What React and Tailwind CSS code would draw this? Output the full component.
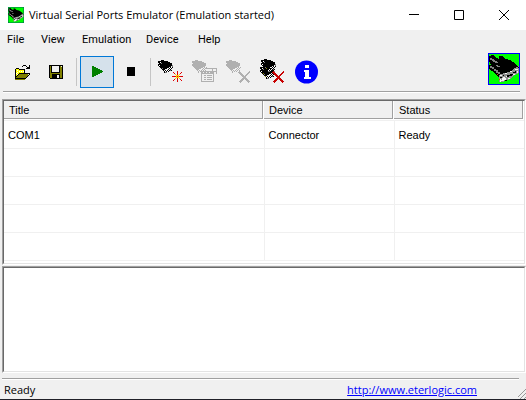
import React from "react";

const menus = ["File", "View", "Emulation", "Device", "Help"];
const menuGaps = ["w-[34px]", "w-[41px]", "w-[64px]", "w-[52px]", "w-[40px]"];

function Plug({ color = "#000", detail = true }) {
  return (
    <g>
      <path
        fill={color}
        d="M7 4h3v1h4v1h2v1h2v3h-1v1h-2v1h-2v1h-2v1h-3v-1H7v-1H6v-1H5v-1H4V8h1V7H4V5h3z"
      />
      <path
        fill={color}
        d="M9 14h1v1H9zM10 15h1v2h-1zM11 14h1v1h-1zM12 15h1v1h-1zM13 14h1v1h-1zM14 15h1v1h-1zM14 13h1v1h-1zM15 14h1v1h-1zM15 12h1v1h-1zM16 13h1v1h-1zM17 12h1v1h-1zM16 11h1v1h-1zM17 14h1v1h-1zM18 11h1v1h-1z"
      />
      {detail && (
        <>
          <path fill="#fff" d="M6 6h1v1H6zM5 9h1v1H5zM11 15h1v1h-1zM12 14h1v1h-1zM13 15h1v1h-1zM14 14h1v1h-1zM15 13h1v1h-1zM16 12h1v1h-1zM17 11h1v1h-1z" />
          <path fill="#808080" d="M7 7h1v1H7zM8 12h1v1H8zM11 16h2v1h-2zM16 14h1v1h-1zM18 9h1v2h-1z" />
        </>
      )}
    </g>
  );
}

function Cross({ color }) {
  return <path stroke={color} strokeWidth="1.7" fill="none" d="M17 16l10.500 10.500M28 15.500l-10.500 11" />;
}

function Icon({ children, smooth }) {
  return (
    <svg viewBox="0 0 34 32" className="block h-8 w-[34px]" shapeRendering={smooth ? "auto" : "crispEdges"} aria-hidden="true">
      {children}
    </svg>
  );
}

function Tool({ label, active, disabled, smooth, children }) {
  return (
    <button
      type="button"
      aria-label={label}
      disabled={disabled}
      className={active ? "h-8 w-[34px] shrink-0 bg-[#d5e1eb] outline outline-1 -outline-offset-1 outline-[#0078d7]" : "h-8 w-[34px] shrink-0"}
    >
      <Icon smooth={smooth}>{children}</Icon>
    </button>
  );
}

function LargePlug({ className, framed }) {
  return (
    <svg viewBox="0 0 32 32" className={className} shapeRendering={framed ? "crispEdges" : "auto"} aria-hidden="true">
      <path fill={framed ? "#00f" : "#006060"} d="M0 0h32v32H0z" />
      <path fill="#0f0" d="M1 1h30v30H1z" />
      <path fill="#000" d="M1 3L5 2L8 5L11 6L11 3L14 3L17 6L22 7L28 11L30 14L22 19L14 23L11 25L8 21L4 18L1 16L1 12L3 12L1 8z" />
      <path fill="#808080" d="M2 5h2v1h2v1h1v1h2v1h1v1H7V9H5V8H4V7H2zM2 13h2v1h2v2h2v1h2v2h2v2h-2v-1H8v-2H6v-2H4v-1H2zM8 12h2v1h2v1h-3v-1H8z" />
      <path fill="#909090" d="M11 22L16 20L22 19L27 15L31 13L31 20L27 22L22 26L15 29L11 29z" />
      <path fill="#f4f4f4" d="M12 22h2v1h-2zM15 24h2v1h1v2h-2v1h-3v-1h1v-2h1zM17 20h2v1h-2zM22 18h2v1h-2zM27 16h3v1h-3zM25 21h2v1h-2zM20 25h2v1h-2zM29 18h1v2h-1zM12 26h1v3h-1zM18 23h2v1h-2z" />
      <path fill="#000" d="M19 22h3v-1h3v1h-1v1h-3v1h-2zM25 19h2v-1h1v2h-3zM12 24h2v1h-2zM17 27h2v1h-2zM15 22h1v1h-1zM30 14h1v1h-1z" />
      <path fill="#c06000" d="M9 21h1v1H9zM11 26h1v1h-1z" />
    </svg>
  );
}

function Separator({ className }) {
  return <div className={"mr-[3px] h-7 w-px shrink-0 bg-[#c5c5c5] " + className} />;
}

function Sunken({ className, children }) {
  return (
    <div className={"flex flex-col border border-t-[#a0a0a0] border-r-white border-b-white border-l-[#a0a0a0] " + className}>
      <div className="flex-1 border border-t-[#696969] border-r-[#e3e3e3] border-b-[#e3e3e3] border-l-[#696969] bg-white">{children}</div>
    </div>
  );
}

export default function App() {
  const rows = [["COM1", "Connector", "Ready"], ["", "", ""], ["", "", ""], ["", "", ""], ["", "", ""]];
  return (
    <div className="flex min-h-screen flex-col border-b border-[#202028] bg-[#f0f0f0] font-['Liberation_Sans',Arial,sans-serif] text-[11px] leading-4 text-black">
      <header className="flex h-[30px] items-center bg-white pl-2">
        <LargePlug className="h-4 w-4 shrink-0" />
        <h1 className="ml-[5px] flex-1 whitespace-nowrap font-['Open_Sans','Noto_Sans',sans-serif] text-[11px]">Virtual Serial Ports Emulator (Emulation started)</h1>
        <div className="flex shrink-0">
          <button type="button" aria-label="Minimize" className="flex h-[30px] w-[45px] items-center justify-center">
            <svg viewBox="0 0 10 10" className="h-[10px] w-[10px]" shapeRendering="crispEdges"><path d="M0 4h10v1H0z" /></svg>
          </button>
          <button type="button" aria-label="Maximize" className="flex h-[30px] w-[45px] items-center justify-center">
            <svg viewBox="0 0 10 10" className="h-[10px] w-[10px]" fill="none" stroke="#000"><path d="M.5.5h9v9h-9z" /></svg>
          </button>
          <button type="button" aria-label="Close" className="flex h-[30px] w-[45px] items-center justify-center">
            <svg viewBox="0 0 10 10" className="h-[10px] w-[10px]" fill="none" stroke="#000"><path d="M0 0l10 10M10 0L0 10" /></svg>
          </button>
        </div>
      </header>

      <nav className="flex h-5 items-center pl-[7px] font-['Roboto',sans-serif] text-[11px]">
        {menus.map((m, i) => (
          <button key={m} type="button" className={"text-left " + menuGaps[i]}>{m}</button>
        ))}
      </nav>

      <div className="mr-[6px] ml-[3px] flex h-[42px] items-center border-b border-[#a0a0a0] pt-[2px] pl-[2px] shadow-[0_1px_0_#fff]">
        <Tool label="Open">
          <path fill="#808000" d="M10 13h4v1h6v3h4v1h-1v2h-1v1h-1v2h-1v1H10z" />
          <path fill="#ff0" d="M11 13h3v1h5v3h-5v1h-1v2h-1v1h-1z" />
          <path fill="#fff" d="M12 14h1v1h-1zM14 15h1v1h-1zM16 15h1v1h-1zM18 15h1v1h-1zM12 16h1v1h-1zM11 17h1v1h-1zM12 18h1v1h-1z" />
          <path fill="#000" d="M11 12h3v1h-3zM14 13h6v1h-6zM10 13h1v9h-1zM19 14h1v3h-1zM14 17h11v1H14zM13 18h1v1h-1zM12 19h1v1h-1zM11 20h1v1h-1zM10 22h11v1H10zM24 18h1v1h-1zM23 19h1v1h-1zM22 20h1v1h-1zM21 21h1v1h-1zM18 9h3v1h-3zM17 10h1v1h-1zM21 10h1v1h-1zM22 11h2v1h-2zM24 9h1v3h-1zM21 12h4v1h-4z" />
        </Tool>
        <Tool label="Save">
          <path d="M10 9h14v14H11v-1h-1z" />
          <path fill="#808000" d="M11 10h2v7h8v-7h2v12H11z" />
          <path fill="#f0f0f0" d="M13 10h7v6h-7zM22 10h1v1h-1z" />
          <path d="M12 9h1v7h-1zM20 9h1v7h-1zM12 16h9v1h-9zM13 18h5v4h-5zM20 18h1v4h-1zM13 18h7v1h-7z" />
          <path fill="#f0f0f0" d="M18 19h2v3h-2z" />
        </Tool>
        <Separator className="ml-[3px]" />
        <Tool label="Start emulation" active>
          <path fill="#008000" d="M12 10h2v1h2v1h2v1h2v1h2v1h1v1h-1v1h-2v1h-2v1h-2v1h-2v1h-2z" />
        </Tool>
        <Tool label="Stop emulation"><path d="M13 11h8v9h-8z" /></Tool>
        <Separator className="ml-[2px]" />
        <Tool label="Create device">
          <Plug />
          <path fill="#e00000" d="M23 15h1v11h-1zM18 20h11v1H18zM19 16h1v1h1v1h1v1h1v3h-1v1h-1v1h-1v1h-1v-1h1v-1h1v-1h1v-3h-1v-1h-1v-1h-1zM27 16h1v1h-1v1h-1v1h-1v3h1v1h1v1h1v1h-1v-1h-1v-1h-1v-1h-1v-3h1v-1h1v-1h1z" />
          <path fill="#ffd000" d="M22 19h3v3h-3zM21 18h1v1h-1zM25 18h1v1h-1zM21 22h1v1h-1zM25 22h1v1h-1z" />
          <path fill="#e00000" d="M23 20h1v1h-1z" />
        </Tool>
        <Tool label="Device properties" disabled>
          <Plug color="#b0b0b0" detail={false} />
          <path fill="#b0b0b0" d="M13 15h13v11H13z" />
          <path fill="#f0f0f0" d="M14 18h11v7H14zM15 16h1v1h-1zM18 16h1v1h-1zM21 16h1v1h-1z" />
          <path fill="#b0b0b0" d="M16 19h2v1h-2zM19 19h5v1h-5zM16 21h2v1h-2zM19 21h5v1h-5zM16 23h2v1h-2zM19 23h5v1h-5zM18 12h11v6h-1v-5h-3v3h-1v-3h-6zM25 15h4v1h-4z" />
        </Tool>
        <Tool label="Delete device" disabled>
          <Plug color="#b0b0b0" detail={false} />
          <Cross color="#b0b0b0" />
        </Tool>
        <Tool label="Delete all devices">
          <g transform="translate(0 6)"><Plug /></g>
          <g transform="translate(1 -1)"><Plug /></g>
          <path fill="#808000" d="M7 17h1v1h-1zM10 12h1v1h-1zM9 20h1v1h-1z" />
          <Cross color="#c80000" />
        </Tool>
        <Tool label="About" smooth>
          <circle cx="16.5" cy="16" r="11.5" fill="#00f" />
          <path fill="#fff" d="M15 9h4v3h-4zM14 14h5v7h2v2h-7v-2h1v-5h-1z" />
        </Tool>
        <LargePlug framed className="mb-[6px] ml-auto h-8 w-8 shrink-0" />
      </div>

      <Sunken className="mt-[7px] ml-[2px]">
        <table className="mb-[2px] w-full table-fixed border-collapse text-left">
          <thead>
            <tr>
              {["Title", "Device", "Status"].map((h, i) => (
                <th key={h} scope="col" className={"h-[19px] border-b border-[#f0f0f0] p-0 align-top font-normal " + (i === 0 ? "w-1/2" : "w-1/4")}>
                  <div className="mr-px h-[18px] border-r border-b border-[#a0a0a0] bg-[#f0f0f0] pl-[5px] leading-[18px]">{h}</div>
                </th>
              ))}
            </tr>
          </thead>
          <tbody>
            {rows.map((r, i) => (
              <tr key={i}>
                {r.map((c, j) => (
                  <td key={j} className={"h-7 border-b border-[#f0f0f0] p-0 pt-[2px] pl-1 " + (j < 2 ? "border-r" : "")}>{c}</td>
                ))}
              </tr>
            ))}
          </tbody>
        </table>
      </Sunken>

      <Sunken className="mt-px ml-[2px] flex-1"><div role="log" aria-label="Log" /></Sunken>

      <footer className="mt-[5px] ml-[2px] flex h-[21px] items-center font-['Open_Sans','Noto_Sans',sans-serif]">
        <div className="flex h-full flex-1 items-center border-t border-[#a0a0a0] pt-[2px] pl-[2px] shadow-[inset_0_1px_0_#fff]">
          <span className="flex-1">Ready</span>
          <a href="http://www.eterlogic.com" className="mr-[42px] text-[#00f] underline">http://www.eterlogic.com</a>
        </div>
        <svg viewBox="0 0 8 10" className="-ml-px h-[10px] w-2 self-end" stroke="#999" aria-hidden="true">
          <path d="M-2 10L8 0M2 10L8 4M6 10L8 8" />
        </svg>
      </footer>
    </div>
  );
}
